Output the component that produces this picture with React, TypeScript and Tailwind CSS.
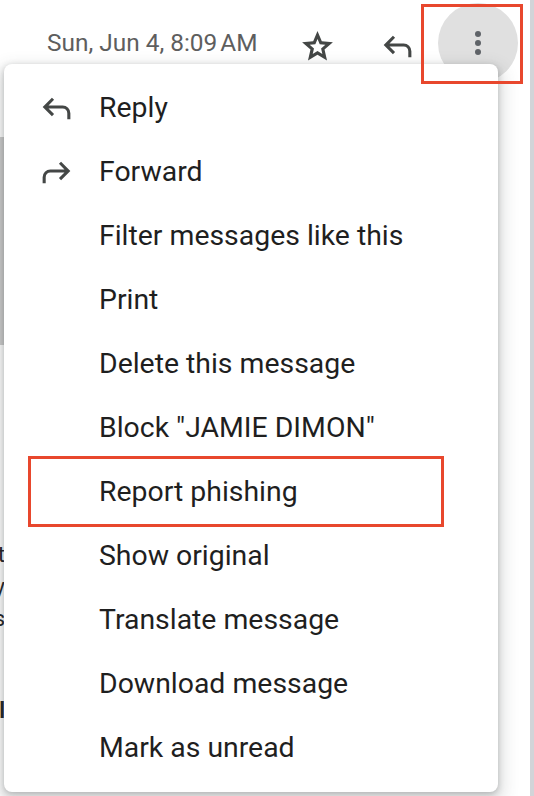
import React from "react";

const REPLY =
  "M760-200v-160q0-50-35-85t-85-35H273l144 144-56 56-240-240 240-240 56 56-144 144h367q83 0 141.5 58.5T840-360v160h-80Z";
const FORWARD =
  "M120-200v-160q0-83 58.5-141.5T320-560h367L543-704l56-56 240 240-240 240-56-56 144-144H320q-50 0-85 35t-35 85v160h-80Z";
const STAR =
  "m354-287 126-76 126 77-33-144 111-96-146-13-57-136-57 135-146 13 111 97-33 143ZM233-120l65-281L80-590l288-25 112-265 112 265 288 25-218 189 65 281-247-149-247 149Z";

function Icon({ d, className }: { d: string; className?: string }) {
  return (
    <svg viewBox="0 -960 960 960" className={className} fill="currentColor">
      <path d={d} />
    </svg>
  );
}

const items: { label: string; icon?: string; highlight?: boolean }[] = [
  { label: "Reply", icon: REPLY },
  { label: "Forward", icon: FORWARD },
  { label: "Filter messages like this" },
  { label: "Print" },
  { label: "Delete this message" },
  { label: 'Block "JAMIE DIMON"' },
  { label: "Report phishing", highlight: true },
  { label: "Show original" },
  { label: "Translate message" },
  { label: "Download message" },
  { label: "Mark as unread" },
];

export default function App() {
  return (
    <div className="relative flex h-[796px] w-[534px] overflow-hidden bg-white font-['Roboto',sans-serif]">
      {/* page */}
      <div className="flex min-w-0 flex-1 flex-col">
        {/* header */}
        <div className="flex h-[86px] shrink-0 items-center">
          <div className="w-[299px] shrink-0 pl-[47px] text-[24.4px] leading-none text-[#5e5e5e] whitespace-nowrap">
            Sun, Jun 4, 8:09{"\u202F"}AM
          </div>
          <div className="flex shrink-0 items-center pt-[6px]">
            <Icon d={STAR} className="h-[37px] w-[37px] text-[#444746]" />
            <Icon d={REPLY} className="ml-[43px] h-[37px] w-[37px] text-[#444746]" />
          </div>
          <div className="ml-[22px] flex h-[80px] w-[80px] shrink-0 flex-col items-center justify-center gap-[3.5px] rounded-full bg-[#e0e0e0]">
            <span className="h-[5.5px] w-[5.5px] rounded-full bg-[#5f6368]" />
            <span className="h-[5.5px] w-[5.5px] rounded-full bg-[#5f6368]" />
            <span className="h-[5.5px] w-[5.5px] rounded-full bg-[#5f6368]" />
          </div>
        </div>
        {/* body (mostly hidden under the menu) */}
        <div className="flex flex-1 flex-col">
          <div className="mt-[51px] h-[208px] w-[4px] bg-[#cccccc]" />
          <div className="mt-[194px] flex w-[5px] flex-col overflow-hidden text-[22px] leading-[32px] text-[#202124]">
            <div className="flex justify-end whitespace-nowrap">at</div>
            <div className="flex justify-end whitespace-nowrap">ly</div>
            <div className="flex justify-end whitespace-nowrap">es</div>
            <div className="mt-[60px] flex justify-end whitespace-nowrap font-bold">il</div>
          </div>
        </div>
      </div>
      <div className="w-[4px] shrink-0 bg-[#d2d4d8]" />

      {/* dropdown menu */}
      <div className="absolute left-[4px] top-[64px] w-[494px] rounded-[8px] bg-white py-[12px] shadow-[0_8px_16px_6px_rgba(60,64,67,0.15),0_2px_6px_rgba(60,64,67,0.3)]">
        {items.map((it) => (
          <div key={it.label} className="relative flex h-[64px] items-center">
            <div className="flex w-[95px] shrink-0 items-center pl-[34px]">
              {it.icon && <Icon d={it.icon} className="h-[37px] w-[37px] text-[#444746]" />}
            </div>
            <span className="text-[28.4px] leading-none text-[#1f1f1f] whitespace-nowrap">{it.label}</span>
            {it.highlight && (
              <div className="absolute left-[24px] top-[-4px] h-[71px] w-[416px] border-[3px] border-[#e8472d]" />
            )}
          </div>
        ))}
      </div>

      {/* annotation around the more button */}
      <div className="absolute left-[421px] top-[4px] h-[80px] w-[102px] border-[3px] border-[#e8472d]" />
    </div>
  );
}
